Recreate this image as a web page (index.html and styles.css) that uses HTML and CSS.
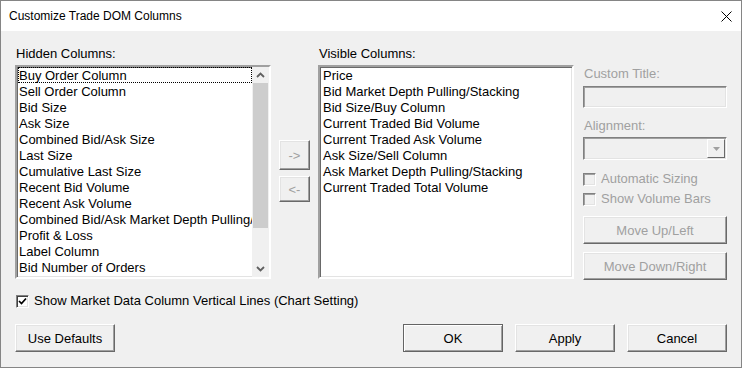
FILE: index.html
```html
<!DOCTYPE html>
<html lang="en">
<head>
    <meta charset="UTF-8">
    <title>Customize Trade DOM Columns</title>
    <link rel="stylesheet" href="styles.css">
</head>
<body>
    <div class="dialog">
        <div class="titlebar">
            <span class="title">Customize Trade DOM Columns</span>
            <svg class="close" width="11" height="11" viewBox="0 0 11 11">
                <path d="M0.5 0.5 L10.5 10.5 M10.5 0.5 L0.5 10.5" stroke="#000" stroke-width="1"/>
            </svg>
        </div>

        <div class="content">
            <div class="columns">
                <div class="col col-hidden">
                    <div class="label">Hidden Columns:</div>
                    <div class="listbox">
                        <ul class="items">
                            <li class="focused">Buy Order Column</li>
                            <li>Sell Order Column</li>
                            <li>Bid Size</li>
                            <li>Ask Size</li>
                            <li>Combined Bid/Ask Size</li>
                            <li>Last Size</li>
                            <li>Cumulative Last Size</li>
                            <li>Recent Bid Volume</li>
                            <li>Recent Ask Volume</li>
                            <li>Combined Bid/Ask Market Depth Pulling/Stacking</li>
                            <li>Profit &amp; Loss</li>
                            <li>Label Column</li>
                            <li>Bid Number of Orders</li>
                            <li>Ask Number of Orders</li>
                        </ul>
                        <div class="scrollbar">
                            <div class="sb-btn">
                                <svg width="9" height="6" viewBox="0 0 9 6"><path d="M1 5 L4.5 1.5 L8 5" fill="none" stroke="#606060" stroke-width="1.8"/></svg>
                            </div>
                            <div class="sb-track"><div class="sb-thumb"></div></div>
                            <div class="sb-btn">
                                <svg width="9" height="6" viewBox="0 0 9 6"><path d="M1 1 L4.5 4.5 L8 1" fill="none" stroke="#606060" stroke-width="1.8"/></svg>
                            </div>
                        </div>
                    </div>
                </div>

                <div class="movers">
                    <button class="btn btn-add" disabled>-&gt;</button>
                    <button class="btn btn-remove" disabled>&lt;-</button>
                </div>

                <div class="col col-visible">
                    <div class="label">Visible Columns:</div>
                    <div class="listbox">
                        <ul class="items">
                            <li>Price</li>
                            <li>Bid Market Depth Pulling/Stacking</li>
                            <li>Bid Size/Buy Column</li>
                            <li>Current Traded Bid Volume</li>
                            <li>Current Traded Ask Volume</li>
                            <li>Ask Size/Sell Column</li>
                            <li>Ask Market Depth Pulling/Stacking</li>
                            <li>Current Traded Total Volume</li>
                        </ul>
                    </div>
                </div>

                <div class="props">
                    <div class="label disabled">Custom Title:</div>
                    <div class="field"></div>
                    <div class="label disabled label-align">Alignment:</div>
                    <div class="field combo">
                        <div class="combo-btn">
                            <svg width="7" height="4" viewBox="0 0 7 4"><path d="M0 0 L7 0 L3.5 4 Z" fill="#a0a0a0"/></svg>
                        </div>
                    </div>
                    <div class="check-row disabled row-auto">
                        <span class="checkbox"></span>
                        <span>Automatic Sizing</span>
                    </div>
                    <div class="check-row disabled row-bars">
                        <span class="checkbox"></span>
                        <span>Show Volume Bars</span>
                    </div>
                    <button class="btn btn-wide btn-up" disabled>Move Up/Left</button>
                    <button class="btn btn-wide btn-down" disabled>Move Down/Right</button>
                </div>
            </div>

            <div class="check-row row-lines">
                <span class="checkbox checked">
                    <svg width="9" height="9" viewBox="0 0 9 9"><path d="M1 4 L3.5 6.5 L8 1.5" fill="none" stroke="#000" stroke-width="1.7"/></svg>
                </span>
                <span>Show Market Data Column Vertical Lines (Chart Setting)</span>
            </div>

            <div class="footer">
                <button class="btn">Use Defaults</button>
                <div class="spacer"></div>
                <button class="btn btn-default">OK</button>
                <button class="btn">Apply</button>
                <button class="btn">Cancel</button>
            </div>
        </div>
    </div>
</body>
</html>
```

FILE: styles.css
```css
* {
    box-sizing: border-box;
}

body {
    margin: 0;
    padding: 0;
    font-family: "Liberation Sans", Arial, sans-serif;
    font-size: 13px;
    color: #000;
    background: #fff;
}

.dialog {
    width: 742px;
    height: 368px;
    border: 1px solid #858585;
    background-color: #f0f0f0;
    display: flex;
    flex-direction: column;
}

.titlebar {
    height: 30px;
    background-color: #fff;
    display: flex;
    align-items: center;
    justify-content: space-between;
    padding: 0 9px 0 8px;
}

.title {
    font-size: 12px;
}

.close {
    display: block;
}

.content {
    padding: 14px 14px 0 14px;
}

.columns {
    display: flex;
    align-items: flex-start;
}

/* text sits 1px lower than the box, like the Windows renderer */
.label {
    line-height: 18px;
    height: 16px;
    padding-left: 1px;
}

.disabled {
    color: #a0a0a0;
}

.col-hidden {
    width: 256px;
}

.col-visible {
    width: 257px;
    margin-left: 8px;
}

.col .label {
    margin-bottom: 4px;
}

.listbox {
    height: 214px;
    background-color: #fff;
    border: 2px solid;
    border-color: #a0a0a0 #fff #fff #a0a0a0;
    box-shadow: inset 1px 1px #696969, inset -1px -1px #e3e3e3;
    display: flex;
    overflow: hidden;
}

.items {
    list-style: none;
    margin: 0;
    padding: 0 0 0 1px;
    flex: 1;
    min-width: 0;
    overflow: hidden;
}

.items li {
    height: 16px;
    line-height: 18px;
    white-space: nowrap;
    overflow: hidden;
    padding-left: 1px;
}

.col-visible .items li {
    padding-left: 2px;
}

.items li.focused {
    outline: 1px dotted #000;
    outline-offset: -1px;
}

.scrollbar {
    width: 17px;
    display: flex;
    flex-direction: column;
    background-color: #f0f0f0;
}

.sb-btn {
    height: 16px;
    display: flex;
    align-items: center;
    justify-content: center;
}

.sb-btn svg {
    display: block;
}

.sb-track {
    flex: 1;
    padding: 0 1px;
}

.sb-thumb {
    height: 145px;
    background-color: #cdcdcd;
}

.movers {
    width: 31px;
    margin-left: 8px;
    padding-top: 95px;
    display: flex;
    flex-direction: column;
}

.btn {
    font-family: "Liberation Sans", Arial, sans-serif;
    font-size: 13px;
    color: #000;
    background-color: #f0f0f0;
    border: 1px solid;
    border-color: #fff #696969 #696969 #fff;
    box-shadow: inset -1px -1px #a0a0a0, inset 1px 1px #e3e3e3;
    width: 100px;
    height: 28px;
    padding: 0;
    margin: 0;
}

.btn:disabled {
    color: #a0a0a0;
}

.btn-add {
    width: 31px;
    height: 30px;
}

.btn-remove {
    width: 31px;
    height: 26px;
    margin-top: 6px;
}

.btn-default {
    border-color: #646464;
    box-shadow: inset 1px 1px #fff, inset -1px -1px #a0a0a0;
}

.props {
    width: 144px;
    margin-left: 9px;
    padding-top: 20px;
    display: flex;
    flex-direction: column;
}

.field {
    height: 22px;
    margin-top: 5px;
    background-color: #f0f0f0;
    border: 1px solid;
    border-color: #808080 #fff #fff #808080;
    box-shadow: inset 1px 1px #a0a0a0, inset -1px -1px #e3e3e3;
}

.label-align {
    margin-top: 9px;
}

.combo {
    height: 23px;
    margin-top: 4px;
    display: flex;
    justify-content: flex-end;
    padding: 1px;
}

.combo-btn {
    width: 18px;
    border: 1px solid;
    border-color: #fff #696969 #696969 #fff;
    display: flex;
    align-items: center;
    justify-content: center;
}

.combo-btn svg {
    display: block;
}

.check-row {
    display: flex;
    align-items: center;
    height: 16px;
    line-height: 16px;
}

.checkbox {
    width: 13px;
    height: 13px;
    margin-right: 5px;
    border: 1px solid;
    border-color: #808080 #fff #fff #808080;
    box-shadow: inset 1px 1px #404040, inset -1px -1px #e3e3e3;
    background-color: #fff;
    display: flex;
    align-items: center;
    justify-content: center;
}

.check-row.disabled .checkbox {
    background-color: #f0f0f0;
    box-shadow: inset 1px 1px #a0a0a0, inset -1px -1px #e3e3e3;
}

.checkbox svg {
    display: block;
}

.row-auto {
    margin-top: 11px;
}

.row-bars {
    margin-top: 4px;
}

.btn-wide {
    width: 144px;
}

.btn-up {
    margin-top: 9px;
}

.btn-down {
    margin-top: 8px;
}

.row-lines {
    margin-top: 13px;
    padding-left: 1px;
}

.footer {
    display: flex;
    margin-top: 15px;
}

.spacer {
    flex: 1;
}

.footer .btn + .btn {
    margin-left: 12px;
}
```
